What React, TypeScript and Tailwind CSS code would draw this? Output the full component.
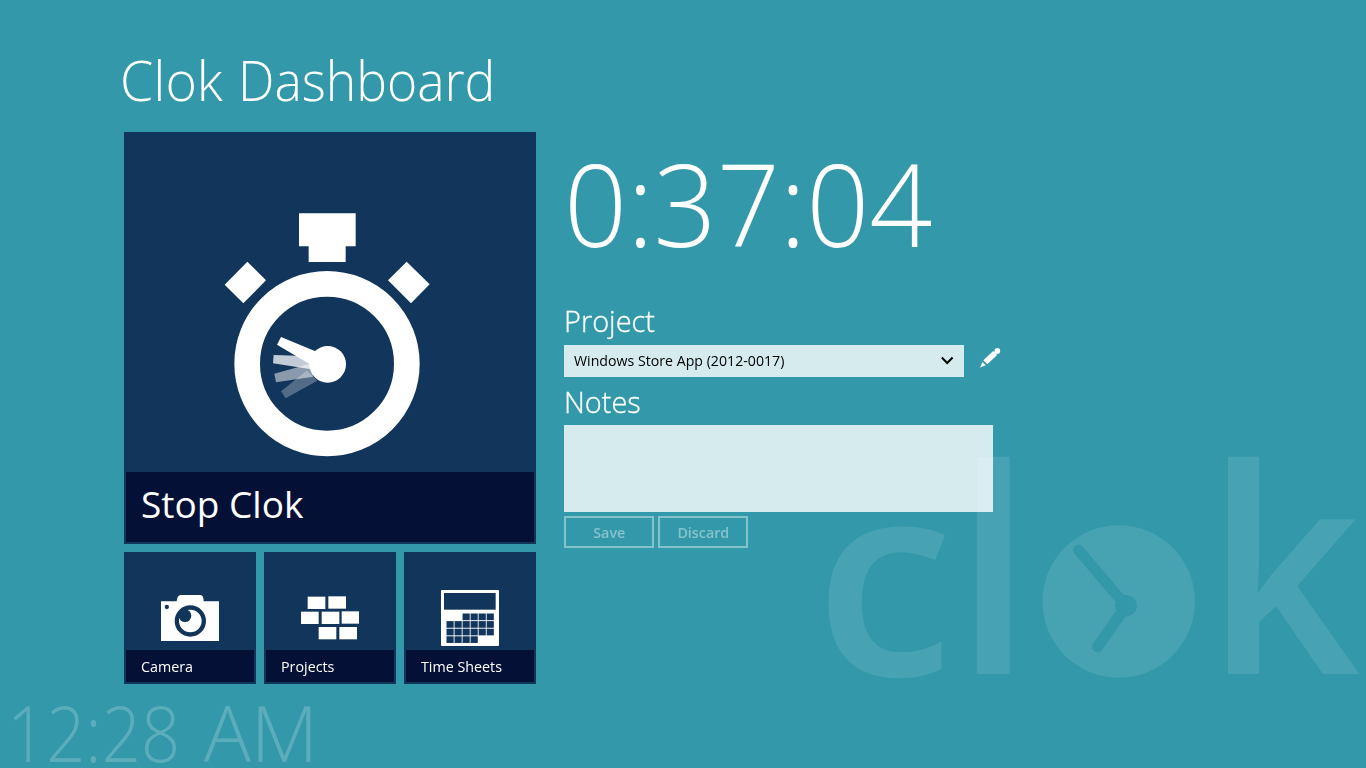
import React from "react";

const LIGHT = "font-['Open_Sans','Noto_Sans',sans-serif] font-light";
const SEMILIGHT = "font-['Open_Sans','Noto_Sans',sans-serif] font-light [-webkit-text-stroke:0.3px_white]";
const REGULAR = "font-['Open_Sans','Noto_Sans',sans-serif] font-normal";

function Stopwatch() {
  return (
    <svg viewBox="0 0 720 810" className="h-[270px] w-[240px] fill-white" aria-hidden="true">
      <path d="M267 40H437V139H407V186H296V139H267Z" />
      <path d="M112 185L168 241L100 310L44 254Z" />
      <path d="M590 185L659 253L603 310L534 241Z" />
      <circle cx="351" cy="491" r="239.5" fill="none" stroke="white" strokeWidth="77" />
      <path d="M213 574L227 595L322 542L290 512Z" opacity=".27" />
      <path d="M193 521L198 547L310 530L305 490Z" opacity=".5" />
      <path d="M191 465L189 490L303 508L305 469Z" opacity=".75" />
      <path d="M213 411L201 434L300 493L320 455Z" />
      <circle cx="353" cy="493" r="55" />
    </svg>
  );
}

function CameraIcon() {
  return (
    <svg viewBox="33 30 174 140" className="h-[46.67px] w-[58px]" aria-hidden="true">
      <path
        className="fill-white"
        d="M33 49H80Q82 30 92 30H152Q161 31 161 49H207V168H33Z"
      />
      <circle cx="50.500" cy="66" r="6.500" fill="#12355b" />
      <circle cx="121" cy="108" r="40.500" fill="white" stroke="#12355b" strokeWidth="13" />
      <circle cx="105" cy="92" r="19" fill="#12355b" />
    </svg>
  );
}

const bricks = [
  [563, 411], [625, 410],
  [543, 456], [605, 456], [665, 455],
  [596, 502], [658, 502],
];

function BricksIcon() {
  return (
    <svg viewBox="543 409 174 131" className="h-[43.67px] w-[58px] fill-white" aria-hidden="true">
      {bricks.map(([x, y]) => (
        <rect key={`${x}-${y}`} x={x} y={y} width="53" height="37" />
      ))}
    </svg>
  );
}

const sheetRows = [[2, 5], [0, 5], [0, 5], [0, 3]];

function SheetIcon() {
  return (
    <svg viewBox="0 0 174 168" className="h-[56px] w-[58px]" aria-hidden="true">
      <rect width="174" height="168" rx="3" fill="white" />
      <rect x="9" y="9" width="155" height="50" fill="#12355b" />
      {sheetRows.flatMap(([from, to], row) =>
        Array.from({ length: to - from + 1 }, (_, i) => (
          <rect
            key={`${row}-${i}`}
            x={16.5 + (from + i) * 24.1}
            y={70.5 + row * 22.8}
            width="21.500"
            height="20"
            fill="#12355b"
          />
        )),
      )}
    </svg>
  );
}

function Tile({ label, pad, children }: { label: string; pad: string; children: React.ReactNode }) {
  return (
    <button className="flex h-[132px] w-[132px] flex-col bg-[#12355b] p-0.5 text-left">
      <span className={`flex h-[96px] w-full justify-center ${pad}`}>{children}</span>
      <span className={`${REGULAR} block h-8 w-full bg-[#051036] pl-[15px] text-[14.5px] leading-[34px] text-white`}>
        <span className="inline-block origin-left scale-x-[.985]">{label}</span>
      </span>
    </button>
  );
}

function Watermark() {
  const letter = "font-['Open_Sans','Noto_Sans',sans-serif] font-semibold text-[285px]";
  return (
    <svg
      viewBox="816 440 550 260"
      className="absolute top-[440px] left-[816px] h-[260px] w-[550px] overflow-visible fill-white/10"
      aria-hidden="true"
    >
      <text transform="translate(814.500 675.500) scale(.985 .95)" className={letter}>c</text>
      <text transform="translate(953.500 674) scale(1 1.003)" className={letter}>l</text>
      <mask id="hands">
        <rect x="1030" y="510" width="180" height="180" fill="white" />
        <g stroke="black" strokeWidth="11" fill="black">
          <path d="M1078.500 550L1126 606" strokeLinecap="round" />
          <path d="M1126 606L1097.500 647" strokeLinecap="round" />
        </g>
        <circle cx="1126" cy="605.700" r="10.800" fill="black" />
      </mask>
      <circle cx="1118.700" cy="601.500" r="76.200" mask="url(#hands)" />
      <text transform="translate(1206 674) scale(.945 1.003)" className={letter}>k</text>
    </svg>
  );
}

export default function App() {
  return (
    <main className="relative h-[768px] w-[1366px] overflow-hidden bg-[#3399aa] text-white">
      <Watermark />
      <div
        className={`${LIGHT} absolute bottom-0 left-[7px] flex h-[72px] text-[78px] leading-[72px] whitespace-nowrap text-white/20`}
      >
        <span className="w-[197px] origin-left scale-x-[.88]">12:28</span>
        <span className="origin-left">AM</span>
      </div>

      <div className="relative pt-[51px] pl-[124px]">
        <h1 className={`${LIGHT} -ml-1 flex h-14 text-[55px] leading-[57px] whitespace-nowrap`}>
          <span className="w-[118px] origin-left scale-x-[.975]">Clok</span>
          <span className="origin-left scale-x-[.938]">Dashboard</span>
        </h1>

        <div className="mt-[25px] flex gap-7">
          <section className="flex w-[412px] flex-col gap-2">
            <button className="flex h-[412px] flex-col bg-[#12355b] p-0.5 text-left">
              <span className="flex h-[338px] w-full pt-[66px] pl-[84px]">
                <Stopwatch />
              </span>
              <span className={`${REGULAR} block h-[70px] w-full bg-[#051036] pl-[15px] text-[37px] leading-[64px]`}>
                <span className="inline-block origin-left">Stop Clok</span>
              </span>
            </button>
            <div className="flex gap-2">
              <Tile label="Camera" pad="pt-[41px]"><CameraIcon /></Tile>
              <Tile label="Projects" pad="pt-[42px]"><BricksIcon /></Tile>
              <Tile label="Time Sheets" pad="pt-[36px]"><SheetIcon /></Tile>
            </div>
          </section>

          <section className="flex w-[440px] flex-col pt-[13px]">
            <div className={`${LIGHT} h-[116px] text-[115px] leading-[116px] whitespace-nowrap`}>
              <span className="inline-block origin-left scale-x-[.962]">0:37:04</span>
            </div>
            <h2 className={`${SEMILIGHT} mt-[43px] h-[41px] text-[29.5px] leading-[33px]`}>
              <span className="inline-block origin-left scale-x-[.98]">Project</span>
            </h2>
            <div className="flex">
              <div className={`${REGULAR} flex h-8 w-[400px] items-center justify-between bg-white/80 pr-2.5 pl-2.5 text-[14.5px] text-black`}>
                <span className="inline-block origin-left scale-x-[.977] whitespace-nowrap">Windows Store App (2012-0017)</span>
                <svg viewBox="0 0 14 10" className="h-2.5 w-3.5" aria-hidden="true">
                  <path d="M1.800 1.500L7.200 7L12.600 1.500" fill="none" stroke="black" strokeWidth="2" />
                </svg>
              </div>
              <svg viewBox="0 0 22 22" className="mt-[2px] ml-[15px] size-[22px] fill-white" aria-hidden="true">
                <circle cx="18.300" cy="4" r="2.900" />
                <path d="M14.200 4L18.200 8L8.300 17.300L4.300 13.300Z" />
                <path d="M3.500 15L6.700 18.200L1 20.500Z" />
              </svg>
            </div>
            <h2 className={`${SEMILIGHT} mt-[9px] h-[39px] text-[29.5px] leading-8`}>
              <span className="inline-block origin-left scale-x-[.98]">Notes</span>
            </h2>
            <div className="h-[87px] w-[429px] bg-white/80" />
            <div className="mt-1 flex gap-1">
              {["Save", "Discard"].map((label) => (
                <button
                  key={label}
                  className="h-8 w-[90px] border-2 border-white/40 pt-px font-['Open_Sans','Noto_Sans',sans-serif] text-[14.5px] leading-[27px] font-semibold text-white/40"
                >
                  <span className="inline-block scale-x-[.985]">{label}</span>
                </button>
              ))}
            </div>
          </section>
        </div>
      </div>
    </main>
  );
}
